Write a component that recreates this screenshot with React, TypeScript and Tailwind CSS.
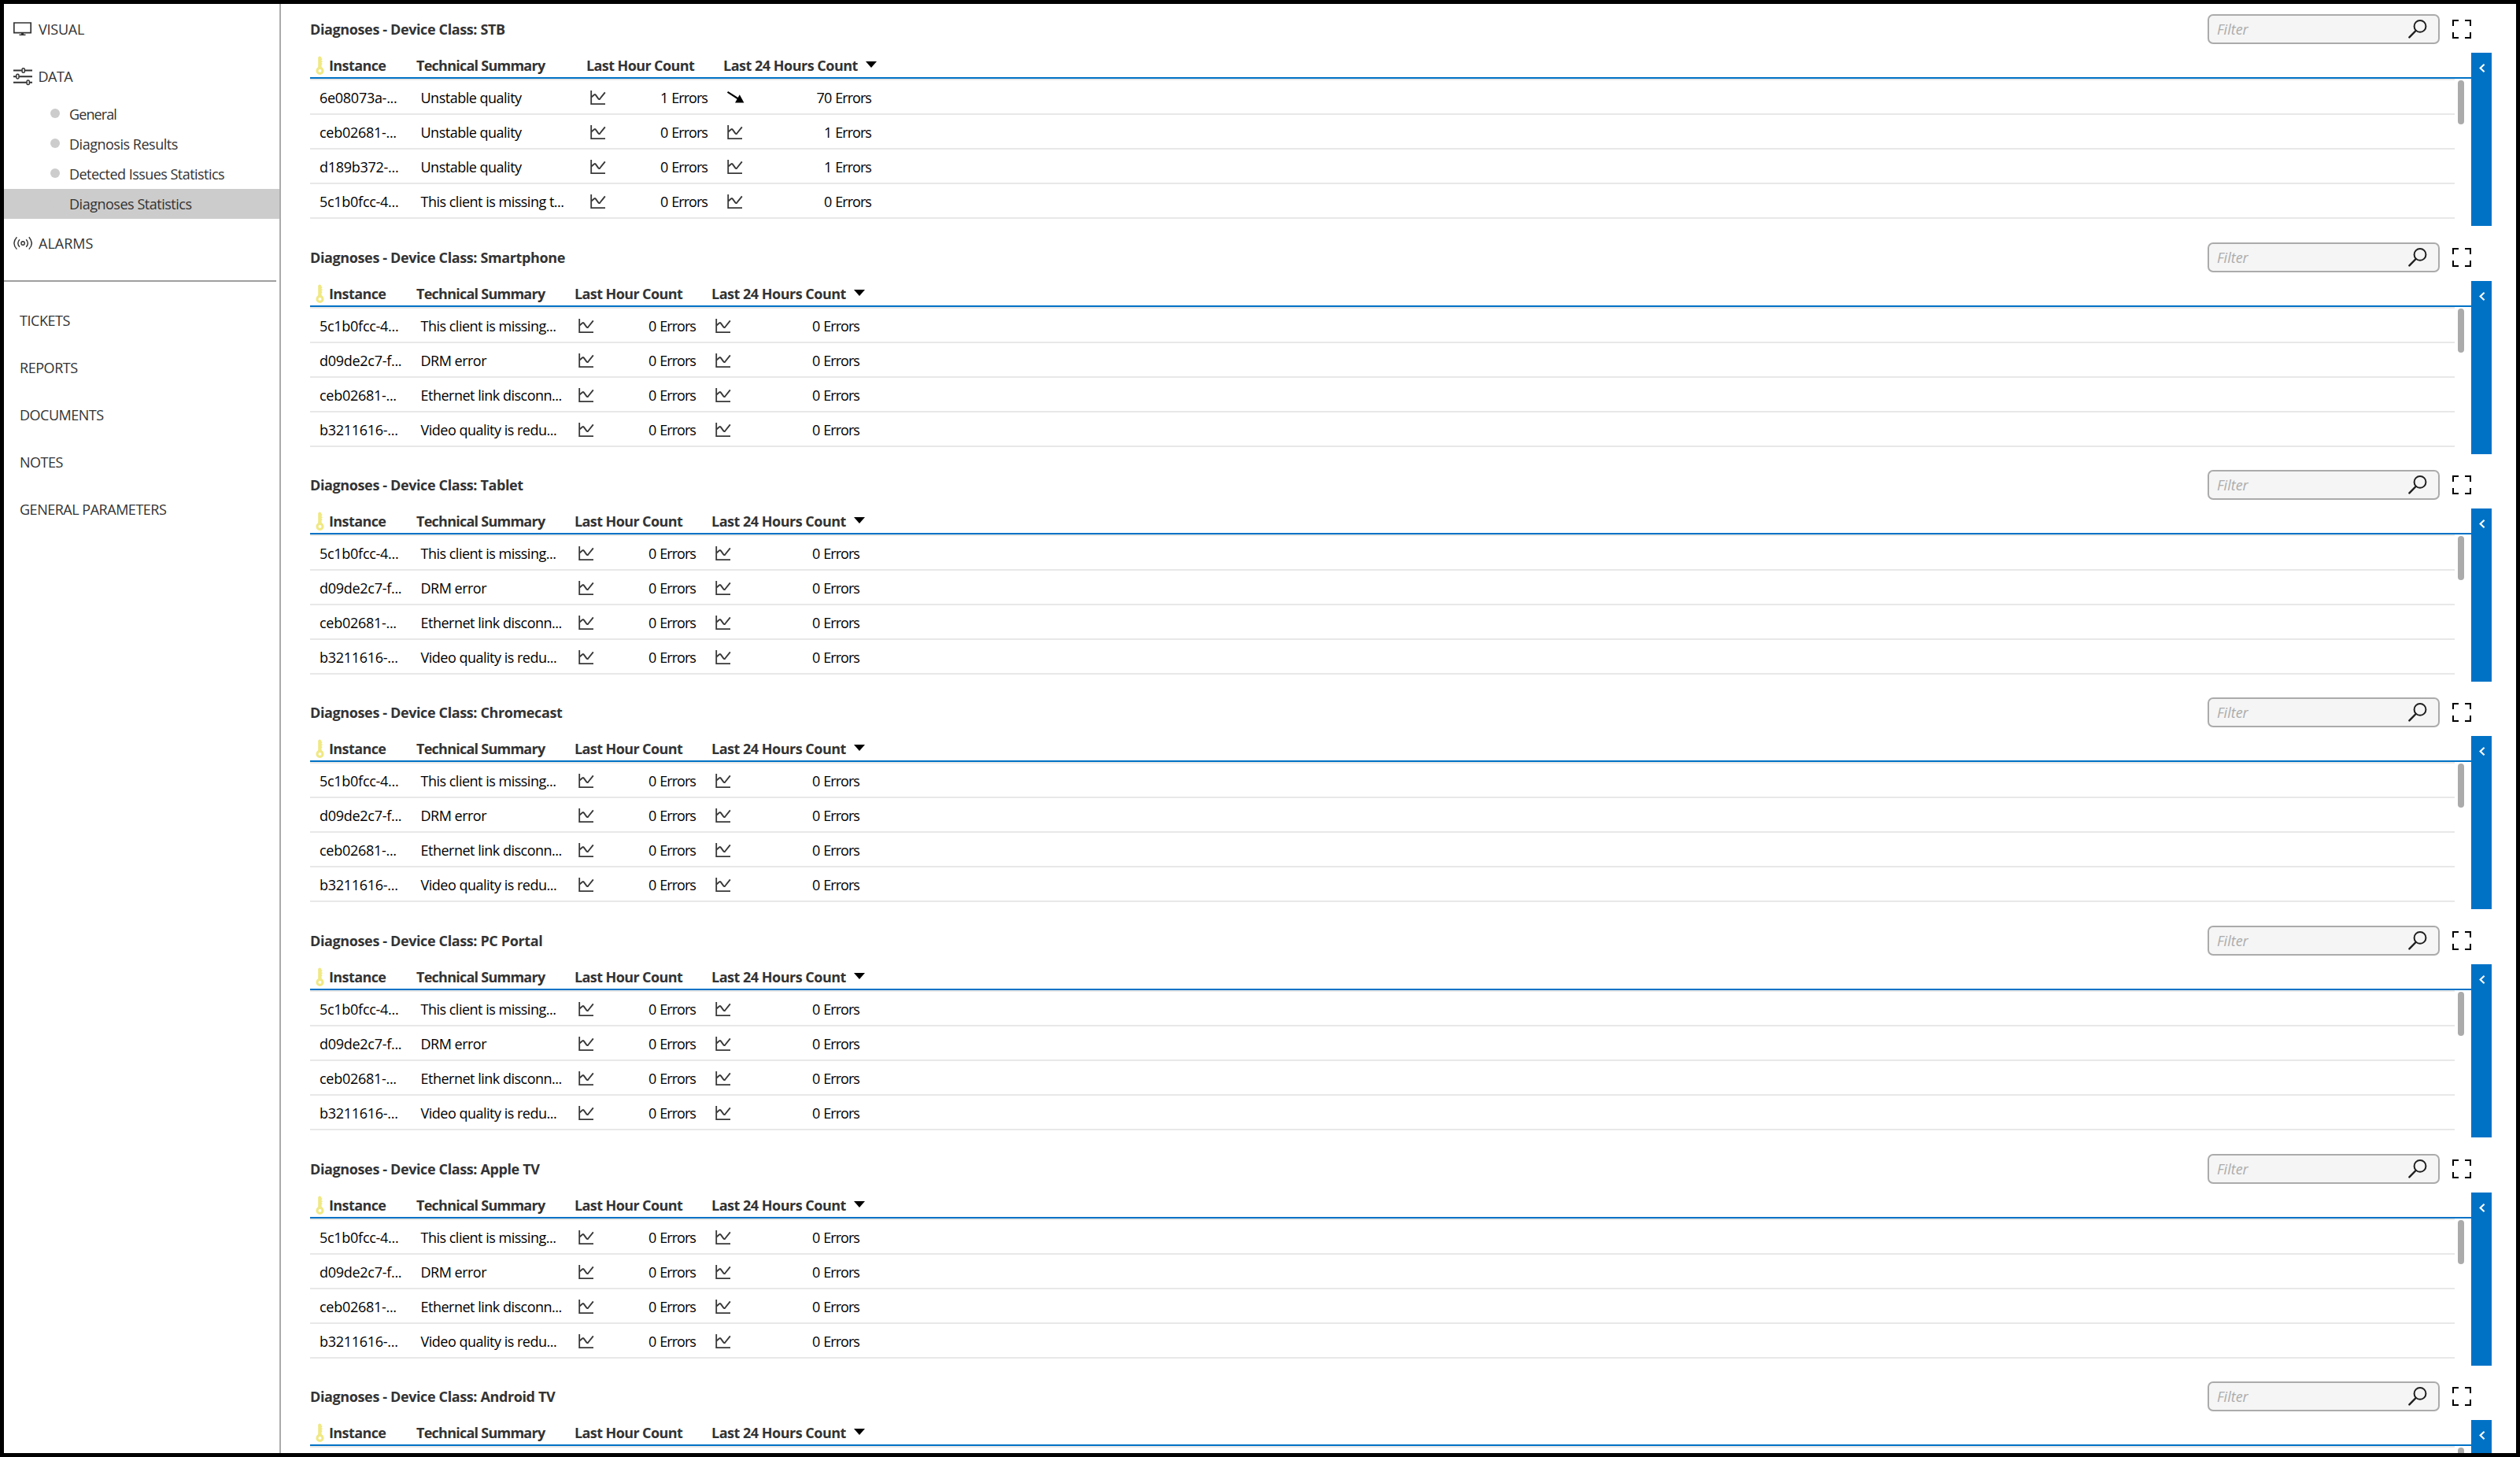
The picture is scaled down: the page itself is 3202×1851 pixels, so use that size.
interface Row {
  id: string;
  summary: string;
  lastHour: number;
  lastDay: number;
  trend?: 'down';
}

interface DeviceClass {
  name: string;
  height: string;
  // summary column is a bit wider on some tables
  summaryWidth: string;
  rows: Row[];
}

const defaultRows: Row[] = [
  { id: '5c1b0fcc-4...', summary: 'This client is missing...', lastHour: 0, lastDay: 0 },
  { id: 'd09de2c7-f...', summary: 'DRM error', lastHour: 0, lastDay: 0 },
  { id: 'ceb02681-...', summary: 'Ethernet link disconn...', lastHour: 0, lastDay: 0 },
  { id: 'b3211616-...', summary: 'Video quality is redu...', lastHour: 0, lastDay: 0 },
];

const stbRows: Row[] = [
  { id: '6e08073a-...', summary: 'Unstable quality', lastHour: 1, lastDay: 70, trend: 'down' },
  { id: 'ceb02681-...', summary: 'Unstable quality', lastHour: 0, lastDay: 1 },
  { id: 'd189b372-...', summary: 'Unstable quality', lastHour: 0, lastDay: 1 },
  { id: '5c1b0fcc-4...', summary: 'This client is missing t...', lastHour: 0, lastDay: 0 },
];

const deviceClasses: DeviceClass[] = [
  { name: 'STB', height: 'h-[290px]', summaryWidth: 'w-[216px]', rows: stbRows },
  { name: 'Smartphone', height: 'h-[289px]', summaryWidth: 'w-[201px]', rows: defaultRows },
  { name: 'Tablet', height: 'h-[289px]', summaryWidth: 'w-[201px]', rows: defaultRows },
  { name: 'Chromecast', height: 'h-[290px]', summaryWidth: 'w-[201px]', rows: defaultRows },
  { name: 'PC Portal', height: 'h-[290px]', summaryWidth: 'w-[201px]', rows: defaultRows },
  { name: 'Apple TV', height: 'h-[289px]', summaryWidth: 'w-[201px]', rows: defaultRows },
  { name: 'Android TV', height: 'h-[290px]', summaryWidth: 'w-[201px]', rows: [] },
];

const dataPages = [
  { label: 'General', tracking: 'tracking-[-0.9px]' },
  { label: 'Diagnosis Results', tracking: 'tracking-[-0.48px]' },
  { label: 'Detected Issues Statistics', tracking: 'tracking-[-0.54px]' },
  { label: 'Diagnoses Statistics', tracking: 'tracking-[-0.48px]' },
];
const activePage = 'Diagnoses Statistics';

const links = [
  { label: 'TICKETS', tracking: 'tracking-[-0.45px]' },
  { label: 'REPORTS', tracking: 'tracking-[-0.45px]' },
  { label: 'DOCUMENTS', tracking: 'tracking-[-0.5px]' },
  { label: 'NOTES', tracking: 'tracking-[-0.5px]' },
  { label: 'GENERAL PARAMETERS', tracking: 'tracking-[-0.48px]' },
];

function MonitorIcon() {
  return (
    <svg width="24" height="24" viewBox="0 0 24 24" fill="none" stroke="#333" className="shrink-0">
      <path d="M0.8 4h21.4v12.6H0.8z" strokeWidth="1.7" />
      <path d="M11.5 17v2" strokeWidth="3" />
      <path d="M7.5 19.3h8" strokeWidth="1.5" />
    </svg>
  );
}

function SlidersIcon() {
  return (
    <svg width="24" height="24" viewBox="0 0 24 24" fill="none" stroke="#333" strokeWidth="1.9" className="shrink-0">
      <path d="M0 4.5h10.8M14.6 4.5H24M0 12.2h3.5M7.3 12.2H24M0 19.8h16.8M20.6 19.8H24" />
      <rect x="11.1" y="1.7" width="3.2" height="5.6" rx="1.4" strokeWidth="1.5" />
      <rect x="3.8" y="9.3" width="3.2" height="5.6" rx="1.4" strokeWidth="1.5" />
      <rect x="17.1" y="17" width="3.2" height="5.6" rx="1.4" strokeWidth="1.5" />
    </svg>
  );
}

function AlarmIcon() {
  return (
    <svg width="24" height="24" viewBox="0 0 24 24" fill="none" stroke="#333" strokeWidth="1.4" className="shrink-0">
      <circle cx="12.1" cy="12" r="2.2" />
      <path d="M8 7.2Q3.6 12 8 16.8M16.2 7.2Q20.6 12 16.2 16.8" />
      <path d="M4.4 4.2Q-2.6 12 4.4 19.6M19.8 4.2Q26.8 12 19.8 19.6" />
    </svg>
  );
}

function KeyIcon() {
  return (
    <svg width="12" height="24" viewBox="0 0 12 24" className="shrink-0">
      <circle cx="5.5" cy="18.9" r="3.5" fill="none" stroke="#f0e884" strokeWidth="3.1" />
      <path d="M3.2 15V1.8L5.2 0.2L7.4 1.8V3.2H8.3V5H7.6V6.4H8.6V8H7.6V9.3H8.3V11H7.6V15z" fill="#f0e884" />
    </svg>
  );
}

function ChartIcon() {
  return (
    <svg width="20" height="20" viewBox="0 0 20 20" fill="none" stroke="#383838" className="shrink-0">
      <path d="M1.2 1v17.2H19" strokeWidth="1.8" />
      <path d="M1.6 9.2L5.2 6.2Q6 5.7 6.7 6.4L10.3 11.4Q11.3 12.6 12.3 11.5L18.8 3.4" strokeWidth="1.9" />
    </svg>
  );
}

function TrendDownIcon() {
  return (
    <svg width="22" height="20" viewBox="0 0 22 20" className="shrink-0">
      <path d="M0.5 2.8L14 11.5" stroke="#000" strokeWidth="2.2" />
      <path d="M15.8 6.2L21.4 16.4H10z" fill="#000" />
    </svg>
  );
}

function SearchIcon() {
  return (
    <svg width="24" height="24" viewBox="0 0 24 24" fill="none" stroke="#1f1f1f" className="shrink-0">
      <circle cx="15" cy="8.4" r="7.4" strokeWidth="2" />
      <path d="M9.6 14L1.4 22.4" strokeWidth="2.4" strokeLinecap="round" />
    </svg>
  );
}

function FullscreenIcon() {
  return (
    <svg width="24" height="24" viewBox="0 0 24 24" fill="none" stroke="#000" strokeWidth="2" className="shrink-0">
      <path d="M1 8V1h7M16 1h7v7M23 16v7h-7M8 23H1v-7" />
    </svg>
  );
}

function Sidebar() {
  return (
    <nav className="w-[352px] shrink-0 border-r-2 border-[#ababab] pt-[2px] text-[#333]">
      <div className="h-[60px] pl-3 flex items-center">
        <MonitorIcon />
        <span className="ml-2 tracking-[-0.25px]">VISUAL</span>
      </div>
      <div className="h-[59px] pl-3 flex items-center">
        <SlidersIcon />
        <span className="ml-[7.5px] tracking-[-0.5px]">DATA</span>
      </div>
      {dataPages.map((page) => (
        <div key={page.label} className={`h-[38px] pl-[59px] flex items-center ${page.label === activePage ? 'bg-[#ccc]' : ''}`}>
          <span className="w-3 h-3 rounded-full bg-[#ccc] -mt-[2px]" />
          <span className={`ml-3 ${page.tracking}`}>{page.label}</span>
        </div>
      ))}
      <div className="h-[60px] mt-px pl-3 flex items-center">
        <AlarmIcon />
        <span className="ml-2">ALARMS</span>
      </div>
      <div className="mt-[17px] mr-1 h-[2px] bg-[#9f9f9f]" />
      <div className="mt-[19px]">
        {links.map((link) => (
          <div key={link.label} className={`h-[60px] pl-5 flex items-center ${link.tracking}`}>
            {link.label}
          </div>
        ))}
      </div>
    </nav>
  );
}

function TableRow({ row, summaryWidth }: { row: Row; summaryWidth: string }) {
  return (
    <div className="h-[44px] pt-[2px] flex items-center border-b-2 border-[#e8e8e8] text-black">
      <div className="w-[129px] pl-3 tracking-[-0.28px]">{row.id}</div>
      <div className={`${summaryWidth} pl-[11.5px] tracking-[-0.5px] whitespace-nowrap`}>{row.summary}</div>
      <div className="w-[160px] pl-[11px] flex items-center justify-between">
        <ChartIcon />
        <span className="tracking-[-0.95px] [word-spacing:1.2px]">{row.lastHour} Errors</span>
      </div>
      <div className="w-[208px] pl-[25px] flex items-center justify-between">
        {row.trend === 'down' ? <TrendDownIcon /> : <ChartIcon />}
        <span className="tracking-[-0.95px] [word-spacing:1.2px]">{row.lastDay} Errors</span>
      </div>
    </div>
  );
}

function DiagnosesTable({ device }: { device: DeviceClass }) {
  return (
    <section className={`${device.height} shrink-0`}>
      <div className="h-[38px] pr-[26px] flex items-center">
        <h2 className="flex-1 font-bold text-[#333] tracking-[-0.38px]">Diagnoses - Device Class: {device.name}</h2>
        <div className="w-[295px] h-[38px] pl-[10px] pr-[14px] flex items-center justify-between rounded-[7px] border-2 border-[#ababab] bg-[#f5f5f5]">
          <span className="italic text-[#ababab]">Filter</span>
          <SearchIcon />
        </div>
        <div className="ml-4">
          <FullscreenIcon />
        </div>
      </div>

      <div className="mt-[11px] flex">
        <div className="flex-1">
          <div className="h-[33px] pt-px flex items-center border-b-2 border-[#0072c6] font-bold text-[#333] tracking-[-0.6px]">
            <div className="w-[135px] pl-[7px] flex items-center">
              <KeyIcon />
              <span className="ml-[5px]">Instance</span>
            </div>
            <div className={`${device.summaryWidth} tracking-[-0.75px]`}>Technical Summary</div>
            <div className="w-[174px]">Last Hour Count</div>
            <div className="flex items-center tracking-[-0.5px]">
              Last 24 Hours Count
              <svg width="14" height="8" viewBox="0 0 14 8" className="ml-[10px] -mt-[2px]">
                <path d="M0 0h14L7 8z" fill="#000" />
              </svg>
            </div>
          </div>
          <div className="flex">
            <div className="w-[2725px] border-t-2 border-[#e8e8e8]">
              {device.rows.map((row) => (
                <TableRow key={row.id} row={row} summaryWidth={device.summaryWidth} />
              ))}
            </div>
            <div className="ml-1 mt-[2px] w-2 h-[56px] rounded-full bg-[#ababab]" />
          </div>
        </div>
        {/* Collapsed side panel handle */}
        <div className="w-[26px] h-[220px] pt-[14px] pl-[10px] bg-[#0072c6]">
          <svg width="8" height="11" viewBox="0 0 8 11" fill="none" stroke="#fff" strokeWidth="2.1">
            <path d="M6.6 0.8L1.6 5.5L6.6 10.2" />
          </svg>
        </div>
      </div>
    </section>
  );
}

export default function App() {
  return (
    <div className="w-[3202px] h-[1851px] flex overflow-hidden border-[5px] border-black bg-white text-[18px] leading-6 font-['Open_Sans','Noto_Sans',sans-serif]">
      <Sidebar />
      <main className="flex-1 min-w-0 flex flex-col pt-[13px] pl-[37px] pr-[31px] overflow-hidden">
        {deviceClasses.map((device) => (
          <DiagnosesTable key={device.name} device={device} />
        ))}
      </main>
    </div>
  );
}
